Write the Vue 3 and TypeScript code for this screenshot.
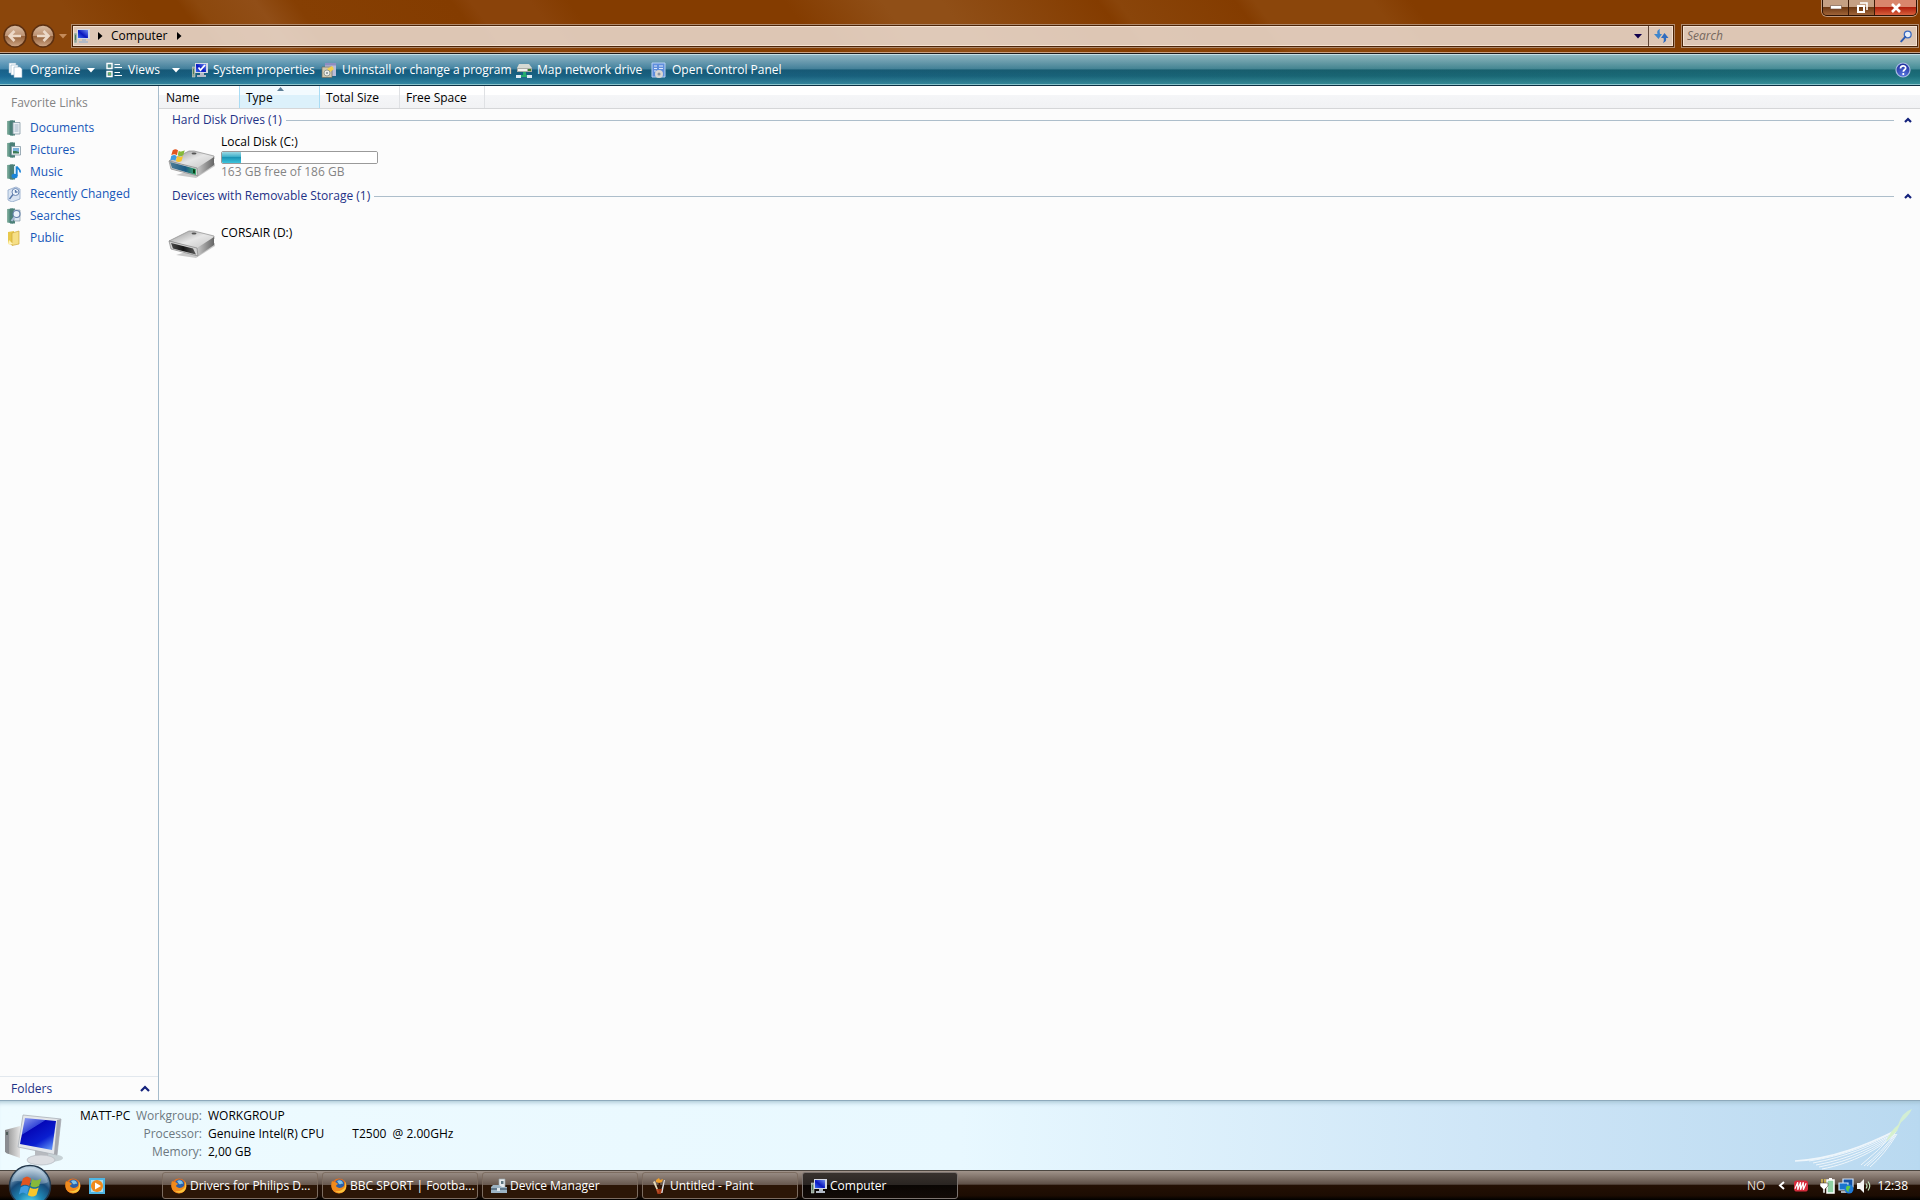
<script setup lang="ts">
import { ref } from 'vue'

interface Tool { id: string; label: string; menu?: boolean }
interface Drive { name: string; kind: 'system' | 'removable'; used?: number; info?: string }
interface Group { title: string; drives: Drive[] }

const tools: Tool[] = [
  { id: 'organize', label: 'Organize', menu: true },
  { id: 'views', label: 'Views', menu: true },
  { id: 'system', label: 'System properties' },
  { id: 'uninstall', label: 'Uninstall or change a program' },
  { id: 'map', label: 'Map network drive' },
  { id: 'panel', label: 'Open Control Panel' },
]
const links = ['Documents', 'Pictures', 'Music', 'Recently Changed', 'Searches', 'Public']
const columns = ['Name', 'Type', 'Total Size', 'Free Space']
const groups: Group[] = [
  { title: 'Hard Disk Drives (1)', drives: [{ name: 'Local Disk (C:)', kind: 'system', used: 12, info: '163 GB free of 186 GB' }] },
  { title: 'Devices with Removable Storage (1)', drives: [{ name: 'CORSAIR (D:)', kind: 'removable' }] },
]
const details = [
  { label: 'Workgroup:', value: 'WORKGROUP' },
  { label: 'Processor:', value: 'Genuine Intel(R) CPU', extra: 'T2500  @ 2.00GHz' },
  { label: 'Memory:', value: '2,00 GB' },
]
const tasks = [
  { label: 'Drivers for Philips D...', icon: 'firefox' },
  { label: 'BBC SPORT | Footba...', icon: 'firefox' },
  { label: 'Device Manager', icon: 'devices' },
  { label: 'Untitled - Paint', icon: 'paint' },
  { label: 'Computer', icon: 'computer' },
]
const sortColumn = ref('Type')
const activeTask = ref('Computer')
const query = ref('')
</script>

<template>
  <svg class="defs" width="0" height="0" aria-hidden="true">
    <defs>
      <linearGradient id="screen" x1="0" y1="1" x2="1" y2="0">
        <stop offset="0" stop-color="#3a6cf0" /><stop offset=".45" stop-color="#0a18c0" /><stop offset="1" stop-color="#6f8df2" />
      </linearGradient>
      <linearGradient id="bigscreen" x1=".1" y1="0" x2=".8" y2="1">
        <stop offset="0" stop-color="#8c9cf0" /><stop offset=".32" stop-color="#3548d8" /><stop offset=".34" stop-color="#0508b8" /><stop offset=".7" stop-color="#0a1fd0" /><stop offset="1" stop-color="#5a8cf4" />
      </linearGradient>
      <linearGradient id="binder" x1="0" x2="1">
        <stop offset="0" stop-color="#8fb5a6" /><stop offset=".5" stop-color="#4f8a7d" /><stop offset="1" stop-color="#2e6866" />
      </linearGradient>
      <linearGradient id="drivetop" x1="0" y1="0" x2="1" y2="1">
        <stop offset="0" stop-color="#8f8f8f" /><stop offset=".5" stop-color="#e6e6e6" /><stop offset="1" stop-color="#c2c2c2" />
      </linearGradient>
      <linearGradient id="driveside" x1="0" x2="1">
        <stop offset="0" stop-color="#c9c9c9" /><stop offset="1" stop-color="#666" />
      </linearGradient>
      <linearGradient id="mouth" x1="0" x2="1">
        <stop offset="0" stop-color="#4a4a4a" /><stop offset=".5" stop-color="#151515" /><stop offset="1" stop-color="#5a5a5a" />
      </linearGradient>
      <linearGradient id="tealface" x1="0" x2="1">
        <stop offset="0" stop-color="#4f7d96" /><stop offset=".6" stop-color="#1c5b84" /><stop offset="1" stop-color="#3fae6e" />
      </linearGradient>
      <linearGradient id="navball" x1="0" y1="0" x2="0" y2="1">
        <stop offset="0" stop-color="#d9bda4" /><stop offset=".48" stop-color="#bd9272" /><stop offset=".52" stop-color="#95613a" /><stop offset="1" stop-color="#d0a98a" />
      </linearGradient>
      <linearGradient id="tower" x1="0" x2="1"><stop offset="0" stop-color="#8b8b8b" /><stop offset="1" stop-color="#e4e4e4" /></linearGradient>
      <radialGradient id="orb" cx=".5" cy=".95" r=".9">
        <stop offset="0" stop-color="#5fe0f8" /><stop offset=".35" stop-color="#1f86b4" /><stop offset=".65" stop-color="#174a78" /><stop offset="1" stop-color="#b8cfe0" />
      </radialGradient>
      <radialGradient id="help" cx=".5" cy=".9" r=".9"><stop offset="0" stop-color="#5a78e0" /><stop offset="1" stop-color="#1c2c9c" /></radialGradient>
      <symbol id="pc" viewBox="0 0 16 16">
        <path d="M0 5h3v10H0z" fill="#8fa091" stroke="#dfe6e0" stroke-width=".5" /><path d="M1 7h1v5H1z" fill="#4f7f5a" />
        <path d="M3 1h13v10H3z" fill="#d3d8e4" /><path d="M4 2h10v8H4z" fill="url(#screen)" />
        <path d="M8 11h4v2h2v2H5v-2h3z" fill="#b3bac6" />
      </symbol>
      <symbol id="firefox" viewBox="0 0 16 16">
        <circle cx="8" cy="8" r="7.500" fill="#e8701a" />
        <circle cx="8.500" cy="6.500" r="5" fill="#2b5fa8" /><path d="M6 3c3-2 6 0 6 3-2-1-2 1-4 0z" fill="#7fc4e8" />
        <path d="M1 3c1 1 2 1 3 1 1 0 2 1 3 2-1 1-2 1-2 2 1 2 5 3 8 0 1-2 1-4 0-6 3 3 3 8 0 11-4 4-10 2-12-2C0 8 0 5 1 3z" fill="#f08a1c" />
        <path d="M14 4c2 4 1 8-2 10-3 1-6 1-8-1 4 1 8-1 10-4z" fill="#f8c63c" />
      </symbol>
      <symbol id="flag" viewBox="0 0 20 20">
        <path d="M3 3c3-2 4-2 7 0L8.500 9.500C6 8 4 8 1 9.500z" fill="#e2551f" />
        <path d="M11 3.500c3 2 5 1 8-.5l-2 6.500c-3 1.500-5 1.500-7.500 0z" fill="#86b93a" />
        <path d="M1 10.800c3-2 5-1.800 7.200-.3L6.500 17C4 15 2 15-.5 17z" fill="#3f9be0" />
        <path d="M9.200 10.800c3 1.800 5 1.500 7.500 0l-2 6.500c-3 2-5 1.500-7.500 0z" fill="#f8c62c" />
      </symbol>
      <symbol id="lens" viewBox="0 0 16 16">
        <circle cx="9.500" cy="5.500" r="4.200" fill="#e6eefa" stroke="#3a6ac0" stroke-width="1.600" />
        <path d="M6.500 8.500L1.500 14" stroke="#2d5bb0" stroke-width="2.400" stroke-linecap="round" />
      </symbol>
    </defs>
  </svg>

  <div class="desktop">
    <header class="frame">
      <div class="caption">
        <div class="winbuttons">
          <button type="button" aria-label="Minimize"><svg width="12" height="5" viewBox="0 0 12 5"><path d="M.5 .5h11v3.500H.5z" fill="#fff" stroke="#6b4b3c" stroke-width=".6" /></svg></button>
          <button type="button" aria-label="Restore"><svg width="12" height="12" viewBox="0 0 12 12"><path d="M4 1h7v7" fill="none" stroke="#fff" stroke-width="1.600" /><path d="M2 4h6v6H2z" fill="none" stroke="#fff" stroke-width="2" /></svg></button>
          <button type="button" class="close" aria-label="Close"><svg width="12" height="10" viewBox="0 0 12 10"><path d="M2 1l8 8M10 1L2 9" stroke="#fff" stroke-width="2.600" /></svg></button>
        </div>
      </div>
      <div class="navrow">
        <div class="travel">
          <button type="button" aria-label="Back"><svg width="24" height="24" viewBox="0 0 24 24"><circle cx="12" cy="12" r="11" fill="url(#navball)" stroke="#5c2f10" stroke-width="1.500" /><path d="M18 12H7M11.500 7L6.500 12l5 5" fill="none" stroke="#ecd9c8" stroke-width="2.600" /></svg></button>
          <button type="button" aria-label="Forward"><svg width="24" height="24" viewBox="0 0 24 24"><circle cx="12" cy="12" r="11" fill="url(#navball)" stroke="#5c2f10" stroke-width="1.500" /><path d="M6 12h11M12.500 7l5 5-5 5" fill="none" stroke="#ecd9c8" stroke-width="2.600" /></svg></button>
          <button type="button" class="recent" aria-label="Recent pages"><svg width="8" height="5" viewBox="0 0 8 5"><path d="M0 0h8L4 4.500z" fill="#c58b5a" /></svg></button>
        </div>
        <div class="address">
          <svg class="i16" viewBox="0 0 16 16" aria-hidden="true"><use href="#pc" width="16" height="16" /></svg>
          <svg class="crumb" width="5" height="8" viewBox="0 0 5 8"><path d="M0 0l4.500 4L0 8z" fill="#000" /></svg>
          <a href="#computer">Computer</a>
          <svg class="crumb" width="5" height="8" viewBox="0 0 5 8"><path d="M0 0l4.500 4L0 8z" fill="#000" /></svg>
          <button type="button" class="drop" aria-label="Previous locations"><svg width="8" height="5" viewBox="0 0 8 5"><path d="M0 0h8L4 4.500z" fill="#10004c" /></svg></button>
          <button type="button" class="refresh" aria-label="Refresh"><svg width="16" height="16" viewBox="0 0 16 16"><path d="M7 1C4 2 4 4 4.500 6H1l4.500 5L9 6H7C6.500 4 6.500 2 7 1z" fill="#3f86cc" /><path d="M10 15c3-1 3.500-3 3-5h2.500L11.500 5 8 10h2.500c.5 2 .5 3-.5 5z" fill="#2f6cc0" /></svg></button>
        </div>
        <label class="search">
          <input v-model="query" type="text" placeholder="Search" aria-label="Search" />
          <svg width="13" height="13" viewBox="0 0 16 16"><use href="#lens" width="16" height="16" /></svg>
        </label>
      </div>
    </header>

    <div class="toolbar" role="toolbar" aria-label="Commands">
      <button v-for="t in tools" :key="t.id" type="button" :class="['tool', t.id]">
        <svg class="i16" viewBox="0 0 16 16" aria-hidden="true">
          <g v-if="t.id === 'organize'" stroke="#8fb0c8" stroke-width=".6" fill="#fff"><path d="M1 1h7v10H1z" /><path d="M3 3h7v10H3z" /><path d="M6 5h6l2 2v8.500H6z" /></g>
          <g v-else-if="t.id === 'views'"><path d="M1 1.500h5v5H1zM1 9.500h5v5H1z" fill="#4f8c8c" stroke="#fff" stroke-width="1.400" /><path d="M2 12l2-2 1 3z" fill="#7cc04c" /><path d="M8.500 2.500H14M8.500 5.500H16M8.500 10.500H14M8.500 13.500H16" stroke="#fff" stroke-width="1.200" /></g>
          <g v-else-if="t.id === 'system'"><use href="#pc" width="16" height="16" /><path d="M6.500 5.500l2 2.500L13 3" fill="none" stroke="#fff" stroke-width="1.800" /></g>
          <g v-else-if="t.id === 'uninstall'"><path d="M4 1h11v13H4z" fill="#b9bcd8" /><path d="M4 1h11v2.500H4z" fill="#8d8cc0" /><path d="M1 5h10v10.500H1z" fill="#cfc7ae" stroke="#6f6c5c" stroke-width=".7" /><path d="M6 7l5-3 2 3-4 3z" fill="#f2d04c" /><circle cx="6" cy="11" r="3" fill="#eef0ea" stroke="#848c86" stroke-width=".8" /><circle cx="6" cy="11" r="1" fill="#7c8a90" /></g>
          <g v-else-if="t.id === 'map'"><path d="M3 2h10l3 4v4H1V6z" fill="#d5d9d3" /><path d="M1 6h15v4H1z" fill="#a9aca6" /><path d="M2 7h9v2H2z" fill="#f2f2ee" /><path d="M12 7h3v2h-3z" fill="#3f7f2a" /><path d="M7 10h3v3h4v2H3v-2h4z" fill="#27ac6e" /><path d="M0 13h5v3H0zM11 13h5v3h-5z" fill="#dceaf4" /></g>
          <g v-else><path d="M2 1h13v14H2z" fill="#5f8edc" stroke="#b9d2f4" stroke-width="1" /><path d="M4 4h3M9 4h4M4 6.500h3M9 6.500h4M4 9h2" stroke="#dfeafc" stroke-width="1.200" /><circle cx="9" cy="12" r="4" fill="#d8d6d2" /><circle cx="9" cy="12" r="1.500" fill="#8894a4" /></g>
        </svg>
        <span>{{ t.label }}</span>
        <svg v-if="t.menu" class="caret" width="8" height="5" viewBox="0 0 8 5"><path d="M0 0h8L4 4.500z" fill="#fff" /></svg>
      </button>
      <button type="button" class="help" aria-label="Help"><svg width="16" height="16" viewBox="0 0 16 16"><circle cx="8" cy="8" r="7" fill="url(#help)" stroke="#a9bce0" stroke-width="1.200" /><path d="M5.500 6.500c0-3.500 5.200-3.300 5.200-.5 0 1.800-2.400 1.700-2.400 3.700M8.300 11v2" fill="none" stroke="#fff" stroke-width="1.700" /></svg></button>
    </div>

    <div class="body">
      <aside class="side">
        <h2>Favorite Links</h2>
        <nav>
          <a v-for="l in links" :key="l" :href="'#' + l.toLowerCase().replace(' ', '-')">
            <svg class="i16" viewBox="0 0 16 16" aria-hidden="true">
              <template v-if="l === 'Public'"><path d="M2 2l6-1v14l-6-1z" fill="#e8c84c" /><path d="M6 3l7-2v13l-7 1.500z" fill="#f6df86" stroke="#d0a93a" stroke-width=".7" /><path d="M3 10l4 4-5 0z" fill="#fff3b8" /></template>
              <template v-else-if="l === 'Recently Changed'"><path d="M2 4l8-3 4 2v10l-8 3-4-2z" fill="#d9e4f2" stroke="#8ea6c8" stroke-width=".8" /><circle cx="9.500" cy="6" r="3.500" fill="#eef5fc" stroke="#6c88b4" /><path d="M9.500 4v2h2M7 8.500L3.500 13" fill="none" stroke="#5878a8" stroke-width="1.300" /></template>
              <template v-else>
                <path d="M1 1l6-.5v15L1 14.500z" fill="url(#binder)" />
                <path d="M4 .5h5v15H4z" fill="#4b8078" />
                <g v-if="l === 'Documents'"><path d="M7 2.500h7v11.500H7z" fill="#edf2f6" stroke="#8599a6" stroke-width=".8" /><path d="M8.500 5h4M8.500 7h4M8.500 9h4M8.500 11h4" stroke="#8ea3ba" stroke-width=".8" /></g>
                <g v-else-if="l === 'Pictures'"><path d="M5.500 4.500h9v8.500h-9z" fill="#f2f6f9" stroke="#8599a6" stroke-width=".8" /><path d="M7 6h6v5H7z" fill="#7eb2dc" /><path d="M7 9l3 0 3 1v1.500H7z" fill="#3c7c58" /></g>
                <g v-else-if="l === 'Music'"><path d="M8 2h4v12H8z" fill="#d8ecf8" /><ellipse cx="8.500" cy="12" rx="3" ry="2.300" fill="#1b84d8" /><path d="M10.700 12V2.500c1 2.500 4 2.500 3.500 6" fill="none" stroke="#1b84d8" stroke-width="1.800" /></g>
                <g v-else><path d="M8 2h6v11H8z" fill="#dbe6f2" stroke="#8599a6" stroke-width=".7" /><circle cx="10.500" cy="6" r="3.500" fill="#e8f1fa" stroke="#5f7ca8" stroke-width="1.100" /><path d="M8.500 9L5.500 13" stroke="#a9bcd8" stroke-width="2" /></g>
              </template>
            </svg>
            {{ l }}
          </a>
        </nav>
        <button type="button" class="folders">Folders<svg width="10" height="7" viewBox="0 0 10 7"><path d="M1 6l4-4 4 4" fill="none" stroke="#14227c" stroke-width="2.200" /></svg></button>
      </aside>

      <main class="content">
        <div class="columns">
          <button v-for="c in columns" :key="c" type="button" :class="{ sorted: c === sortColumn }" @click="sortColumn = c">
            {{ c }}
            <svg v-if="c === sortColumn" class="sort" width="7" height="4" viewBox="0 0 7 4"><path d="M0 4l3.500-4L7 4z" fill="#5c7e96" /></svg>
          </button>
        </div>
        <section v-for="g in groups" :key="g.title">
          <div class="grouphead">
            <h3>{{ g.title }}</h3>
            <button type="button" :aria-label="'Collapse ' + g.title"><svg width="8" height="6" viewBox="0 0 8 6"><path d="M1 5l3-3 3 3" fill="none" stroke="#14227c" stroke-width="2.200" /></svg></button>
          </div>
          <div v-for="d in g.drives" :key="d.name" :class="['drive', d.kind]">
            <svg width="48" height="32" viewBox="0 0 48 32" aria-hidden="true">
              <path d="M8 29l20 3 19-12v-3z" fill="#000" opacity=".2" />
              <path d="M1 15L21 5h5l20 5v3L29 23z" fill="url(#drivetop)" stroke="#8c8c8c" stroke-width=".7" />
              <path d="M29 22l17-11v8L30 30z" fill="url(#driveside)" />
              <path d="M1 15l28 7 1 8L3 23z" fill="#d2d2d2" stroke="#858585" stroke-width=".7" />
              <template v-if="d.kind === 'system'">
                <path d="M2 16l26 7v6L4 22z" fill="url(#tealface)" /><path d="M25 23l2 .5v4l-2-.5z" fill="#0d3f18" />
                <use href="#flag" x="2" y="2" width="16" height="15" />
              </template>
              <path v-else d="M3 17l22 5.500 3 6L5 22.500z" fill="url(#mouth)" />
              <ellipse cx="26" cy="7.500" rx="2.500" ry="1" fill="#555" />
            </svg>
            <div class="info">
              <span>{{ d.name }}</span>
              <progress v-if="d.used" :value="d.used" max="100" :aria-label="d.name + ' space used'"></progress>
              <small v-if="d.info">{{ d.info }}</small>
            </div>
          </div>
        </section>
      </main>
    </div>

    <footer class="details">
      <svg class="bigpc" width="60" height="54" viewBox="0 0 60 54" aria-hidden="true">
        <path d="M0 16l15-4v32L1 39z" fill="url(#tower)" /><path d="M0 16l4 1v23l-4-2z" fill="#8a8c90" /><path d="M1 18h2v3H1z" fill="#4f5c58" />
        <ellipse cx="44" cy="44" rx="14" ry="4" fill="#000" opacity=".16" />
        <path d="M30 36l14 2-2 7H30z" fill="#b7babf" /><ellipse cx="36" cy="46" rx="14" ry="5" fill="#dcdee2" stroke="#b3b8be" stroke-width=".7" />
        <path d="M18 1l38 4-4 36-39-8z" fill="#e3e6ea" stroke="#aab0b8" stroke-width=".8" />
        <path d="M52 6l4-1-4 36-3-1z" fill="#a5a8ae" />
        <path d="M20 4l31 3-4 29-32-6z" fill="url(#bigscreen)" />
      </svg>
      <h1>MATT-PC</h1>
      <dl>
        <div v-for="d in details" :key="d.label">
          <dt>{{ d.label }}</dt>
          <dd>{{ d.value }}</dd>
          <dd v-if="d.extra" class="extra">{{ d.extra }}</dd>
        </div>
      </dl>
      <svg class="swoosh" width="126" height="64" viewBox="0 0 126 64" aria-hidden="true">
        <g fill="none" stroke="#fff" stroke-width="1" opacity=".75">
          <path d="M6 54C44 52 78 38 108 23" stroke-width="1.600" /><path d="M20 54C54 49 82 38 107 24" /><path d="M24 56C56 50 84 39 107 25" /><path d="M27 58C60 52 86 40 106 26" /><path d="M30 60C62 54 88 41 106 27" /><path d="M33 62C64 56 90 42 105 28" />
          <path d="M72 58Q90 44 105 26" /><path d="M75 59Q92 46 106 27" /><path d="M78 59Q94 46 107 27" /><path d="M81 60Q96 47 108 27" />
        </g>
        <path d="M97 35Q101 24 109 18l4-5-5 11z" fill="#d6f0cc" /><path d="M109 18Q113 5 123 2q-3 7-14 16z" fill="#d2eed4" />
      </svg>
    </footer>

    <nav class="taskbar" aria-label="Taskbar">
      <button type="button" class="start" aria-label="Start">
        <svg width="44" height="44" viewBox="0 0 44 44"><circle cx="22" cy="22" r="20.500" fill="url(#orb)" stroke="#23384c" stroke-width="1.500" /><path d="M4 18C8-1 36-1 40 18 30 24 14 14 4 18z" fill="#fff" opacity=".28" /><use href="#flag" x="11" y="11" width="24" height="23" /></svg>
      </button>
      <div class="quick">
        <button type="button" aria-label="Firefox"><svg class="i16" viewBox="0 0 16 16"><use href="#firefox" width="16" height="16" /></svg></button>
        <button type="button" aria-label="Media Player"><svg class="i16" viewBox="0 0 16 16"><path d="M0 0h16v16H0z" fill="#4fb6e4" /><path d="M2 2h12v12H2z" fill="#a9dcf2" /><circle cx="8" cy="8" r="6" fill="#f08a1c" /><path d="M6 4.500l6 3.500-6 3.500z" fill="#fff" /></svg></button>
      </div>
      <div class="tasks">
        <button v-for="t in tasks" :key="t.label" type="button" :class="{ active: t.label === activeTask }" @click="activeTask = t.label">
          <svg class="i16" viewBox="0 0 16 16" aria-hidden="true">
            <use v-if="t.icon === 'firefox'" href="#firefox" width="16" height="16" />
            <use v-else-if="t.icon === 'computer'" href="#pc" width="16" height="16" />
            <g v-else-if="t.icon === 'devices'"><path d="M8 1h6v9H8z" fill="#e6ebee" stroke="#9aa6ac" stroke-width=".7" /><path d="M10 3h2.500v3H10z" fill="#5f7782" /><path d="M2 7h6l3 2h5v6H0V9z" fill="#9db4c4" /><path d="M0 11h16" stroke="#4c6478" stroke-width="1.500" /><path d="M6 10h3v3H6z" fill="#dfe7ec" /></g>
            <g v-else><path d="M2 4l5 11 1-1L4 3z" fill="#e8d9b8" /><path d="M7.500 4l.5 11h1.500L9 4z" fill="#3c1a08" /><path d="M13 2L9.500 15h2L14 2z" fill="#dfe2e8" /><path d="M5 2l3-2 1 2 3-1-1 3-3 1-3-1z" fill="#f0a02c" /><path d="M5 11h6l-1 5H6.500z" fill="#b53c14" opacity=".85" /></g>
          </svg>
          {{ t.label }}
        </button>
      </div>
      <div class="tray">
        <span class="lang">NO</span>
        <button type="button" class="more" aria-label="Show hidden icons"><svg width="7" height="9" viewBox="0 0 7 9"><path d="M6 1L2 4.500 6 8" fill="none" stroke="#fff" stroke-width="2" /></svg></button>
        <svg class="red" width="14" height="12" viewBox="0 0 15 12"><rect width="15" height="12" rx="3" fill="#d62c3c" /><path d="M1 9l3-7v8l3-8v8l3-8v8l3-7" fill="none" stroke="#fff" stroke-width="1.300" /></svg>
        <svg class="i16" viewBox="0 0 16 16"><path d="M7 2h7v13H7z" fill="#8fd0a4" stroke="#fff" stroke-width="1.500" /><path d="M9 0h3v2H9z" fill="#fff" /><path d="M2 1v4M5 1v4" stroke="#f0d050" stroke-width="1.300" /><path d="M0 5h8v3L5 11v4H3v-4L0 8z" fill="#fff" stroke="#3a2a1e" stroke-width=".5" /></svg>
        <svg class="i16" viewBox="0 0 16 16"><path d="M5 1h10v8H5z" fill="#1452a8" stroke="#cfe4fa" stroke-width="1.200" /><path d="M1 5h9v7H1z" fill="#1a74cc" stroke="#cfe4fa" stroke-width="1.200" /><path d="M3 14h6" stroke="#dce8f4" stroke-width="1.500" /><circle cx="11" cy="11" r="4.500" fill="#1f7ad8" /><path d="M9 8c3-1 4 1 3 2s-2 2-1 4c-3-1-4-4-2-6z" fill="#5cc848" /></svg>
        <svg class="i16" viewBox="0 0 16 16"><path d="M1 5h3l4-4v14l-4-4H1z" fill="#f4f4f4" /><path d="M10 5.500q2 2.500 0 5M12 3.500q3.500 4.500 0 9" fill="none" stroke="#c6e8c0" stroke-width="1.200" /></svg>
        <time>12:38</time>
      </div>
    </nav>
  </div>
</template>

<style>
body { margin: 0; }
</style>

<style scoped>
.defs { position: absolute; }
.desktop {
  display: flex; flex-direction: column; min-height: 100vh;
  font-family: "Open Sans", "Noto Sans", sans-serif; font-size: 12px; line-height: 18px; color: #000; background: #fcfcfc;
}
button { padding: 0; border: 0; background: none; font: inherit; color: inherit; display: flex; align-items: center; }
a { text-decoration: none; color: inherit; }
h1, h2, h3, dl, dd { margin: 0; font-size: 12px; font-weight: 400; }
svg { display: block; flex: none; }
.i16 { width: 16px; height: 16px; }

.frame {
  height: 54px; box-sizing: border-box; border-bottom: 1px solid #1e1a18; box-shadow: inset 0 -1px #c9a184;
  background: linear-gradient(53deg, #8b460b 0 5%, #843d00 9% 11%, #8c480d 12%, #914e17 15%, #863f03 17%, #843c00 25%, #8a430a 26% 29%, #843c00 31% 42%, #904f17 47% 50%, #843c00 58%, #8a450a 59%, #843c00 65%, #8b460b 66% 72%, #843c00 74%);
}
.caption { display: flex; justify-content: flex-end; height: 24px; padding-right: 3px; }
.winbuttons {
  display: flex; height: 16px; box-sizing: border-box; border: 1px solid #2c1204; border-top: 0; border-radius: 0 0 5px 5px;
  box-shadow: 0 0 0 1px #c39a7c; overflow: hidden;
}
.winbuttons button { box-sizing: border-box; width: 26px; justify-content: center; background: linear-gradient(#c5a084 0 45%, #6f3a14 50%, #a06438); border-right: 1px solid #3c1a08; }
.winbuttons .close { width: 41px; border: 0; background: linear-gradient(#d9866c 0 45%, #b0200c 50%, #d8603c); }
.navrow { display: flex; align-items: center; height: 24px; }
.travel { display: flex; align-items: center; gap: 4px; width: 71px; box-sizing: border-box; padding-left: 3px; }
.address, .search {
  display: flex; align-items: center; height: 24px; box-sizing: border-box;
  border: 1px solid #b08a6c; outline: 1px solid #4c2408; outline-offset: -2px; box-shadow: inset 0 0 0 2px #f6e2d0;
  background: rgba(240, 228, 220, .82);
}
.address { flex: 1; padding: 0 2px; }
.address a { margin: 0 9px 0 8px; }
.address .crumb { margin-left: 8px; }
.address a + .crumb { margin-left: 0; }
.drop { width: 20px; margin-left: auto; justify-content: center; }
.refresh { width: 24px; height: 20px; justify-content: center; border-left: 1px solid #5f4636; }
.search { width: 238px; margin: 0 1px 0 6px; padding: 0 5px; }
.search input { flex: 1; min-width: 0; padding: 0; border: 0; outline: 0; background: none; font: italic 12px/18px "Open Sans", sans-serif; }
.search input::placeholder { color: #77685e; opacity: 1; }

.toolbar {
  display: flex; align-items: center; height: 32px; box-sizing: border-box; padding: 0 9px 0 8px;
  border-top: 1px solid #c4dce2; border-bottom: 1px solid #0c2f42; box-shadow: inset 0 -1px #8cc4cc; color: #fff; text-shadow: 1px 1px 2px #06283c;
  background: linear-gradient(rgba(255, 255, 255, .5), rgba(255, 255, 255, .18) 46%, rgba(0, 20, 30, .14) 50%, rgba(0, 20, 30, .06) 70%, rgba(120, 220, 220, .3)), linear-gradient(90deg, #1c6e9c, #196080 6%, #1a6a90 14%, #1a6484 40%, #1b6a78 70%, #1d7480);
}
.tool { gap: 6px; white-space: nowrap; }
.organize { width: 98px; }
.views { width: 86px; }
.system { width: 129px; gap: 5px; }
.uninstall { width: 195px; gap: 5px; }
.map { width: 134px; gap: 5px; }
.caret { margin-left: 1px; }
.views .caret { margin-left: 6px; }
.help { margin-left: auto; }

.body { flex: 1; display: flex; }
.side { width: 158px; display: flex; flex-direction: column; border-right: 1px solid #a6bccc; }
.side h2 { padding: 8px 11px 5px; color: #848484; }
.side nav { display: flex; flex-direction: column; }
.side a { display: flex; align-items: center; gap: 8px; height: 22px; padding-left: 6px; color: #1556b8; }
.folders { justify-content: space-between; height: 24px; margin-top: auto; padding: 0 8px 0 11px; border-top: 1px solid #e2e8ee; color: #1e3287; }
.content { flex: 1; min-width: 0; }
.columns { display: flex; height: 23px; box-sizing: border-box; padding-left: 1px; border-bottom: 1px solid #d5d6d8; background: linear-gradient(#fff 0 9px, #f5f6f8 9px, #f1f2f4); }
.columns button { position: relative; box-sizing: border-box; width: 80px; padding: 2px 0 0 6px; border-right: 1px solid #dfe1e4; }
.columns button:last-child { width: 85px; }
.columns .sorted { background: linear-gradient(#f2fafe 0 9px, #dcf1fb 9px); border-right-color: #a9dcf4; box-shadow: -1px 0 #a9dcf4; }
.sort { position: absolute; top: 1px; left: 37px; }
.grouphead { display: flex; align-items: center; height: 22px; padding: 0 8px 0 13px; color: #1e3287; }
.grouphead h3 { flex: 1; display: flex; align-items: center; gap: 4px; }
.grouphead h3::after { content: ""; flex: 1; height: 1px; background: #adbecb; }
.grouphead button { margin-left: 10px; }
.drive { display: flex; align-items: center; gap: 5px; height: 54px; padding-left: 9px; box-sizing: border-box; }
.system .info { padding-bottom: 4px; }
.drive.system { width: auto; }
.removable { height: 70px; }
.removable .info { padding-bottom: 18px; }
.drive > svg { margin-top: 8px; }
.removable > svg { margin-top: 0; }
.info { display: flex; flex-direction: column; }
.info small { font-size: 12px; line-height: 16px; color: #848484; }
progress { appearance: none; width: 157px; height: 13px; box-sizing: border-box; border: 1px solid #9a9a9a; border-radius: 2px; background: #fff; overflow: hidden; }
progress::-webkit-progress-bar { background: #fff; }
progress::-webkit-progress-value { background: linear-gradient(#9ad8e4, #46b4cc 40%, #1c94b4 50%, #3cc4dc); }

.details {
  display: flex; height: 70px; box-sizing: border-box; border-top: 1px solid #8eaabc; box-shadow: inset 0 5px 5px -4px #9cbccc;
  background: linear-gradient(90deg, #eefbff, #e8f8ff 50%, #cce4f6 80%, #b9d9f0);
}
.bigpc { margin: 13px 0 0 5px; }
.details h1 { width: 54px; margin: 6px 8px 0 15px; white-space: nowrap; }
.details dl { margin-top: 6px; }
.details dl div { display: flex; gap: 6px; height: 18px; }
.details dt { width: 60px; display: flex; justify-content: flex-end; color: #6c7880; }
.details dd { white-space: pre; }
.details .extra { margin-left: 22px; }
.swoosh { margin: 6px 5px 0 auto; }

.taskbar {
  display: flex; align-items: center; height: 30px; box-sizing: border-box; color: #fff;
  border-top: 1px solid #4c4640; background: linear-gradient(#a0938a, #5f5047 45%, #241004 50%, #1c0c02 85%, #000);
}
.start { position: relative; margin: 0 13px 0 8px; height: 30px; }
.quick { display: flex; gap: 8px; width: 97px; }
.tasks { display: flex; gap: 4px; }
.tasks button {
  gap: 3px; width: 156px; height: 27px; box-sizing: border-box; padding-left: 8px; border: 1px solid #7c6c60; border-radius: 3px; white-space: nowrap;
  background: linear-gradient(#968a82, #6a5a50 46%, #2c1606 50%, #2c1606);
}
.tasks .active { background: linear-gradient(#38322e, #2a2522 46%, #0a0604 50%, #120a06); border-color: #7c7470; }
.tray { display: flex; align-items: center; gap: 2px; margin-left: auto; padding-right: 12px; }
.lang { margin-right: 11px; color: #e4dcd6; }
.more { margin-right: 7px; }
.red { margin-right: 10px; }
.tray time { margin-left: 3px; }
</style>
